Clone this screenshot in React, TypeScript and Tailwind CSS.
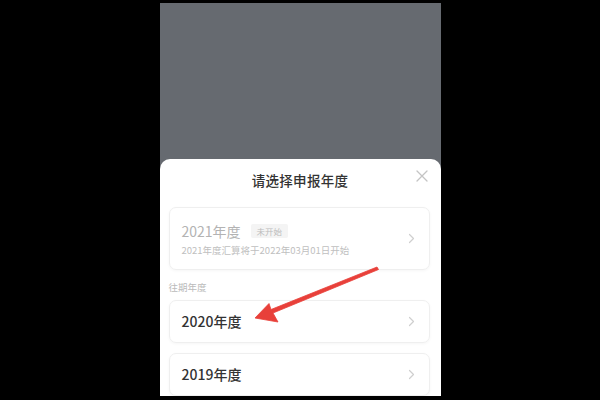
import React from "react";

const Chevron = () => (
  <svg width="7" height="11" viewBox="0 0 7 11" fill="none">
    <path d="M1.5 1.5 L5.5 5.5 L1.5 9.5" stroke="#cfcfcf" strokeWidth="1.2" strokeLinecap="round" strokeLinejoin="round" />
  </svg>
);

export default function App() {
  return (
    <div
      className="w-[600px] h-[400px] bg-black overflow-hidden relative"
      style={{ fontFamily: '"Noto Sans CJK SC", "Noto Sans", sans-serif' }}
    >
      <div className="mx-auto mt-[3px] w-[281px] h-[393px] bg-[#666a70] flex flex-col">
        <div className="h-[156px] shrink-0" />
        <div className="flex-1 bg-white rounded-t-[10px] pl-[9px] pr-[11px] flex flex-col relative">
          <div className="h-[42px] flex items-center justify-center relative">
            <span className="text-[13.5px] font-medium text-[#333] tracking-[0.3px] ml-[2px]">请选择申报年度</span>
            <svg className="absolute right-[2px] top-[11px]" width="12" height="12" viewBox="0 0 12 12">
              <path d="M1 1 L11 11 M11 1 L1 11" stroke="#c4c4c4" strokeWidth="1.3" strokeLinecap="round" />
            </svg>
          </div>
          <div className="mt-[6px] h-[63px] rounded-[7px] border border-[#efefef] shadow-[0_1px_3px_rgba(0,0,0,0.04)] flex items-center pl-[12px] pr-[14px]">
            <div className="flex-1 flex flex-col gap-[4px]">
              <div className="flex items-center gap-[10px]">
                <span className="text-[14px] text-[#b3b3b3] leading-[18px]">2021年度</span>
                <span className="text-[8.5px] text-[#bcbcbc] bg-[#f4f4f4] rounded-[2px] px-[6px] leading-[14px]">未开始</span>
              </div>
              <span className="text-[9.5px] text-[#c0c0c0] leading-[12px]">2021年度汇算将于2022年03月01日开始</span>
            </div>
            <Chevron />
          </div>
          <div className="mt-[11px] text-[9.5px] text-[#bbbbbb] leading-[12px]">往期年度</div>
          <div className="mt-[7px] h-[43px] rounded-[7px] border border-[#efefef] shadow-[0_1px_3px_rgba(0,0,0,0.04)] flex items-center pl-[12px] pr-[14px]">
            <span className="flex-1 text-[14px] font-medium text-[#333]">2020年度</span>
            <Chevron />
          </div>
          <div className="mt-[10px] h-[43px] rounded-[7px] border border-[#efefef] shadow-[0_1px_3px_rgba(0,0,0,0.04)] flex items-center pl-[12px] pr-[14px]">
            <span className="flex-1 text-[14px] font-medium text-[#333]">2019年度</span>
            <Chevron />
          </div>
        </div>
      </div>
      <svg className="absolute left-0 top-0" width="600" height="400" viewBox="0 0 600 400">
        <path
          d="M377 267 L378.5 269.5 L273 313 L278 322 L255 318 L269 303.5 L271 309.5 Z"
          fill="#e8403a"
          stroke="#e8403a"
          strokeWidth="0.8"
          strokeLinejoin="round"
        />
      </svg>
    </div>
  );
}
